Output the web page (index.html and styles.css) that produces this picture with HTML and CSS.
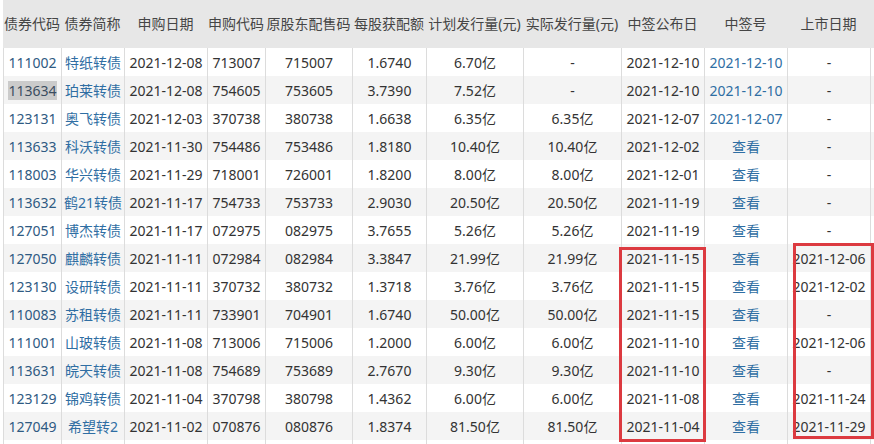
FILE: index.html
```html
<!DOCTYPE html>
<html lang="zh-CN">
<head>
<meta charset="utf-8">
<title>可转债申购</title>
<link rel="stylesheet" href="styles.css">
</head>
<body>
<div class="wrap">
<table class="bonds">
<thead>
<tr>
<th class="c1">债券代码</th><th class="c2">债券简称</th><th class="c3">申购日期</th><th class="c4">申购代码</th><th class="c5">原股东配售码</th><th class="c6">每股获配额</th><th class="c7">计划发行量(元)</th><th class="c8">实际发行量(元)</th><th class="c9">中签公布日</th><th class="c10">中签号</th><th class="c11">上市日期</th><th class="c12"></th>
</tr>
</thead>
<tbody>
<tr><td class="code">111002</td><td class="name">特纸转债</td><td>2021-12-08</td><td>713007</td><td>715007</td><td>1.6740</td><td>6.70亿</td><td>-</td><td>2021-12-10</td><td class="link">2021-12-10</td><td>-</td><td></td></tr>
<tr><td class="code"><span class="sel">113634</span></td><td class="name">珀莱转债</td><td>2021-12-08</td><td>754605</td><td>753605</td><td>3.7390</td><td>7.52亿</td><td>-</td><td>2021-12-10</td><td class="link">2021-12-10</td><td>-</td><td></td></tr>
<tr><td class="code">123131</td><td class="name">奥飞转债</td><td>2021-12-03</td><td>370738</td><td>380738</td><td>1.6638</td><td>6.35亿</td><td>6.35亿</td><td>2021-12-07</td><td class="link">2021-12-07</td><td>-</td><td></td></tr>
<tr><td class="code">113633</td><td class="name">科沃转债</td><td>2021-11-30</td><td>754486</td><td>753486</td><td>1.8180</td><td>10.40亿</td><td>10.40亿</td><td>2021-12-02</td><td class="link">查看</td><td>-</td><td></td></tr>
<tr><td class="code">118003</td><td class="name">华兴转债</td><td>2021-11-29</td><td>718001</td><td>726001</td><td>1.8200</td><td>8.00亿</td><td>8.00亿</td><td>2021-12-01</td><td class="link">查看</td><td>-</td><td></td></tr>
<tr><td class="code">113632</td><td class="name">鹤21转债</td><td>2021-11-17</td><td>754733</td><td>753733</td><td>2.9030</td><td>20.50亿</td><td>20.50亿</td><td>2021-11-19</td><td class="link">查看</td><td>-</td><td></td></tr>
<tr><td class="code">127051</td><td class="name">博杰转债</td><td>2021-11-17</td><td>072975</td><td>082975</td><td>3.7655</td><td>5.26亿</td><td>5.26亿</td><td>2021-11-19</td><td class="link">查看</td><td>-</td><td></td></tr>
<tr><td class="code">127050</td><td class="name">麒麟转债</td><td>2021-11-11</td><td>072984</td><td>082984</td><td>3.3847</td><td>21.99亿</td><td>21.99亿</td><td>2021-11-15</td><td class="link">查看</td><td>2021-12-06</td><td></td></tr>
<tr><td class="code">123130</td><td class="name">设研转债</td><td>2021-11-11</td><td>370732</td><td>380732</td><td>1.3718</td><td>3.76亿</td><td>3.76亿</td><td>2021-11-15</td><td class="link">查看</td><td>2021-12-02</td><td></td></tr>
<tr><td class="code">110083</td><td class="name">苏租转债</td><td>2021-11-11</td><td>733901</td><td>704901</td><td>1.6740</td><td>50.00亿</td><td>50.00亿</td><td>2021-11-15</td><td class="link">查看</td><td>-</td><td></td></tr>
<tr><td class="code">111001</td><td class="name">山玻转债</td><td>2021-11-08</td><td>713006</td><td>715006</td><td>1.2000</td><td>6.00亿</td><td>6.00亿</td><td>2021-11-10</td><td class="link">查看</td><td>2021-12-06</td><td></td></tr>
<tr><td class="code">113631</td><td class="name">皖天转债</td><td>2021-11-08</td><td>754689</td><td>753689</td><td>2.7670</td><td>9.30亿</td><td>9.30亿</td><td>2021-11-10</td><td class="link">查看</td><td>-</td><td></td></tr>
<tr><td class="code">123129</td><td class="name">锦鸡转债</td><td>2021-11-04</td><td>370798</td><td>380798</td><td>1.4362</td><td>6.00亿</td><td>6.00亿</td><td>2021-11-08</td><td class="link">查看</td><td>2021-11-24</td><td></td></tr>
<tr><td class="code">127049</td><td class="name">希望转2</td><td>2021-11-02</td><td>070876</td><td>080876</td><td>1.8374</td><td>81.50亿</td><td>81.50亿</td><td>2021-11-04</td><td class="link">查看</td><td>2021-11-29</td><td></td></tr>
<tr><td class="code">&nbsp;</td><td></td><td></td><td></td><td></td><td></td><td></td><td></td><td></td><td></td><td></td><td></td></tr>
</tbody>
</table>
<div class="mark mark-a"></div>
<div class="mark mark-b"></div>
</div>
</body>
</html>
```
FILE: styles.css
```css
html, body {
  margin: 0;
  padding: 0;
  overflow: hidden;
  background: #fff;
}
.wrap {
  position: relative;
  width: 874px;
  height: 444px;
  overflow: hidden;
}
.bonds {
  margin-left: 3px;
  border-collapse: separate;
  border-spacing: 0;
  table-layout: fixed;
  width: 897px;
  font-family: "Noto Sans", "Noto Sans CJK SC", sans-serif;
  font-size: 14px;
  color: #333;
}
.bonds th,
.bonds td {
  box-sizing: border-box;
  text-align: center;
  white-space: nowrap;
  overflow: hidden;
  padding: 0;
}
.bonds th {
  height: 48px;
  background: #e7e7e7;
  font-weight: normal;
  color: #454545;
  padding-bottom: 2px;
}
.bonds td {
  height: 28px;
  border-left: 1px solid #dcdcdc;
  line-height: 27px;
}
.bonds tbody tr:nth-child(even) td {
  background: #f4f4f4;
}
.c1 { width: 58px; }
.c2 { width: 63px; }
.c3 { width: 83px; }
.c4 { width: 58px; }
.c5 { width: 87px; }
.c6 { width: 74px; }
.c7 { width: 97px; }
.c8 { width: 98px; }
.c9 { width: 83px; }
.c10 { width: 83px; }
.c11 { width: 83px; }
.c12 { width: 30px; }
.code { color: #2f5a82; }
.name { color: #2f6ea3; }
.link { color: #2f6ea3; }
.sel {
  background: #cbcbcb;
  color: #3b4d60;
}
.mark {
  position: absolute;
  border: 3px solid #dc3a40;
  box-sizing: border-box;
}
.mark-a {
  left: 619px;
  top: 247px;
  width: 87px;
  height: 195px;
}
.mark-b {
  left: 793px;
  top: 243px;
  width: 81px;
  height: 196px;
}
```
